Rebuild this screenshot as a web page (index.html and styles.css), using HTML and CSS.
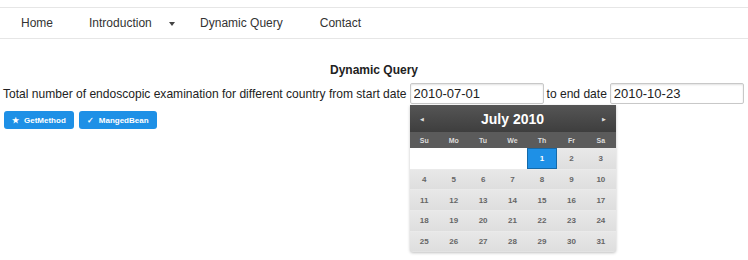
FILE: index.html
```html
<!DOCTYPE html>
<html lang="en">
<head>
    <meta charset="UTF-8">
    <title>Dynamic Query</title>
    <link rel="stylesheet" href="styles.css">
</head>
<body>
    <div class="navbar">
        <a class="nav-item home">Home</a>
        <a class="nav-item intro">Introduction <span class="caret"></span></a>
        <a class="nav-item query">Dynamic Query</a>
        <a class="nav-item">Contact</a>
    </div>

    <h3 class="title">Dynamic Query</h3>

    <div class="query-row">
        <span class="label">Total number of endoscopic examination for different country from start date</span>
        <div class="picker">
            <input type="text" class="date-input" value="2010-07-01">
            <div class="calendar">
                <div class="cal-head">
                    <span class="cal-arrow">&#9664;</span>
                    <span class="cal-title">July 2010</span>
                    <span class="cal-arrow">&#9654;</span>
                </div>
                <div class="cal-dow">
                    <span>Su</span><span>Mo</span><span>Tu</span><span>We</span><span>Th</span><span>Fr</span><span>Sa</span>
                </div>
                <div class="cal-days">
                    <span class="empty"></span><span class="empty"></span><span class="empty"></span><span class="empty"></span>
                    <span class="active">1</span><span>2</span><span>3</span>
                    <span>4</span><span>5</span><span>6</span><span>7</span><span>8</span><span>9</span><span>10</span>
                    <span>11</span><span>12</span><span>13</span><span>14</span><span>15</span><span>16</span><span>17</span>
                    <span>18</span><span>19</span><span>20</span><span>21</span><span>22</span><span>23</span><span>24</span>
                    <span>25</span><span>26</span><span>27</span><span>28</span><span>29</span><span>30</span><span>31</span>
                </div>
            </div>
        </div>
        <span class="label">to end date</span>
        <input type="text" class="date-input" value="2010-10-23">
    </div>

    <div class="buttons">
        <button class="btn"><span class="icon">&#9733;</span>GetMethod</button>
        <button class="btn"><span class="icon">&#10003;</span>MangedBean</button>
    </div>
</body>
</html>
```

FILE: styles.css
```css
html, body {
    height: 100%;
}
body {
    margin: 0;
    min-height: 260px;
    font-family: "Liberation Sans", Arial, sans-serif;
    font-size: 12px;
    color: #222;
    background: #fff;
}
.navbar {
    margin-top: 7px;
    height: 30px;
    border-top: 1px solid #e6e6e6;
    border-bottom: 1px solid #e6e6e6;
    display: flex;
    align-items: center;
    padding-left: 21px;
}
.nav-item {
    color: #333;
    margin-right: 37px;
}
.home {
    margin-right: 36px;
}
.intro {
    margin-right: 25px;
}
.caret {
    display: inline-block;
    margin-left: 14px;
    vertical-align: middle;
    border-top: 4px solid #444;
    border-left: 3px solid transparent;
    border-right: 3px solid transparent;
}
.title {
    margin: 24px 0 0;
    text-align: center;
    font-size: 12px;
    font-weight: bold;
    line-height: 14px;
}
.query-row {
    display: flex;
    align-items: center;
    gap: 3px;
    margin-top: 6px;
    padding-left: 3px;
    font-size: 12.06px;
    white-space: nowrap;
}
.label {
    flex-shrink: 0;
}
.picker {
    position: relative;
    flex-shrink: 0;
}
.date-input {
    width: 134px;
    height: 21px;
    box-sizing: border-box;
    padding: 1px 3px;
    border: 1px solid #c8c8c8;
    border-radius: 2px;
    box-shadow: inset 0 1px 2px rgba(0, 0, 0, 0.12);
    font-family: "Liberation Sans", Arial, sans-serif;
    font-size: 13px;
    color: #222;
    flex-shrink: 0;
}
.calendar {
    position: absolute;
    left: 0;
    top: 22px;
    width: 206px;
    background: #e3e3e3;
    border-radius: 0 0 3px 3px;
    box-shadow: 0 1px 3px rgba(0, 0, 0, 0.25);
    z-index: 2;
}
.cal-head {
    height: 27px;
    display: flex;
    align-items: center;
    justify-content: space-between;
    padding: 0 10px;
    background: linear-gradient(#555, #3e3e3e);
    color: #fff;
}
.cal-arrow {
    font-size: 5px;
    color: #ddd;
}
.cal-title {
    font-weight: bold;
    font-size: 14px;
}
.cal-dow {
    display: grid;
    grid-template-columns: repeat(7, 1fr);
    height: 16px;
    align-items: center;
    background: #5b5b5b;
    color: #ddd;
    font-size: 7px;
    font-weight: bold;
    text-align: center;
}
.cal-days {
    display: grid;
    grid-template-columns: repeat(7, 1fr);
    grid-auto-rows: 20.7px;
    padding-bottom: 1px;
}
.cal-days span {
    display: flex;
    align-items: center;
    justify-content: center;
    font-size: 8px;
    font-weight: bold;
    color: #666;
    border-top: 1px solid #eaeaea;
    background: linear-gradient(#e8e8e8, #dedede);
}
.cal-days .empty {
    background: #fff;
    border-top-color: #fff;
}
.cal-days .active {
    background: #1e90e6;
    color: #fff;
    border: 1px solid #1469a8;
}
.buttons {
    display: flex;
    gap: 5px;
    margin-top: 7px;
    padding-left: 4px;
}
.btn {
    display: flex;
    align-items: center;
    gap: 5px;
    height: 18px;
    padding: 0 8px;
    border: none;
    border-radius: 3px;
    background: #1e90e6;
    color: #fff;
    font-family: "Liberation Sans", Arial, sans-serif;
    font-size: 8px;
    font-weight: bold;
}
.icon {
    font-size: 8px;
}
```
